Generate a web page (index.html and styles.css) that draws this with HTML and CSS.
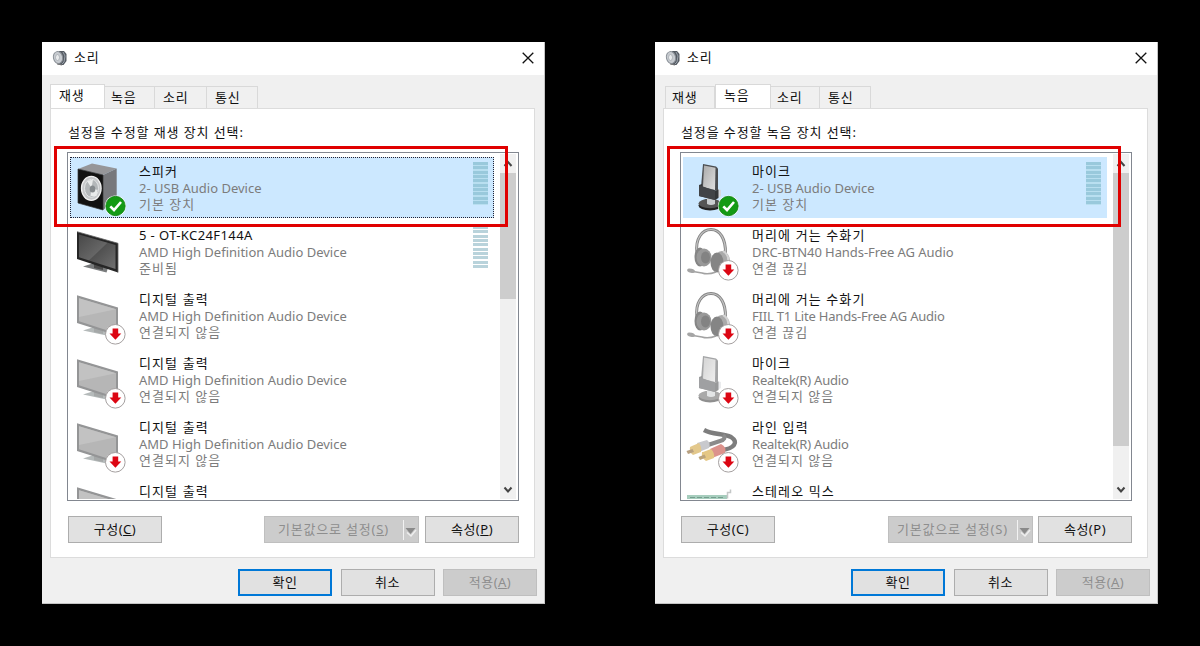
FILE: index.html
```html
<!DOCTYPE html>
<html lang="ko">
<head>
<meta charset="utf-8">
<title>소리</title>
<link rel="stylesheet" href="styles.css">
</head>
<body>
<svg class="defs" aria-hidden="true">
  <defs>
    <linearGradient id="screen" x1="0" y1="0" x2="1" y2="1"><stop offset="0" stop-color="#484848"/><stop offset=".5" stop-color="#666"/><stop offset=".52" stop-color="#515151"/><stop offset="1" stop-color="#707070"/></linearGradient>
    <linearGradient id="metal" x1="0" y1="0" x2="1" y2="1"><stop offset="0" stop-color="#aaa"/><stop offset="1" stop-color="#e0e0e0"/></linearGradient>
    <symbol id="app" viewBox="0 0 16 16">
      <path d="M7 1l5 0 2.500 3v7l-3 4-5 0z" fill="#555b63"/>
      <path d="M11 2l2 4-1 6-2 2" stroke="#9aa2ab" fill="none"/>
      <ellipse cx="6" cy="7.500" rx="4.600" ry="6" fill="#c7cbd0" stroke="#8c9299" transform="rotate(-12 6 7.500)"/>
      <ellipse cx="5.500" cy="7.500" rx="2" ry="3" fill="#e9ebed" stroke="#a1a6ac" stroke-width=".7"/>
      <path d="M5 14l5 1" stroke="#777" stroke-width="1"/>
    </symbol>
    <symbol id="ok" viewBox="0 0 56 62">
      <circle cx="45.500" cy="49" r="10.600" fill="#fff"/>
      <circle cx="45.500" cy="49" r="9.700" fill="#149a14" stroke="#0c7f12" stroke-width=".8"/>
      <path d="M40.300 49.300l3.700 3.700 7-8" fill="none" stroke="#fff" stroke-width="2.600"/>
    </symbol>
    <symbol id="down" viewBox="0 0 56 62">
      <circle cx="45.300" cy="49.300" r="9.800" fill="#fff" stroke="#a5a0a0" stroke-width="1"/>
      <path d="M42.600 43.500h5.600v5h3.100l-5.900 6.300-5.900-6.300h3.100z" fill="#dc0613"/>
    </symbol>
    <symbol id="speaker" viewBox="0 0 56 62">
      <path d="M8 12L22 6.500 46.700 11.500 33 18z" fill="#969699"/>
      <path d="M33 18l13.700-6.500V42L33 53z" fill="#77787c"/>
      <path d="M8 12l25 6v35L8 46z" fill="#121212" stroke="#333" stroke-width=".7"/>
      <ellipse cx="21.300" cy="31.300" rx="9.800" ry="12" fill="#c6c8ca" stroke="#f1f1f1" stroke-width="1.300"/>
      <ellipse cx="21.500" cy="31.300" rx="7" ry="9" fill="#b3b7b9" stroke="#e2e4e5"/>
      <path d="M21.500 31l-4.500-7 6-1.500zM21.500 31l6 2-1 6-6 0z" fill="#e9ebeb"/>
      <ellipse cx="22.500" cy="32" rx="2.800" ry="3.500" fill="#858a8d"/>
    </symbol>
    <symbol id="tv" viewBox="0 0 56 62">
      <path d="M13 45.500l11-3.500 14 5-1.500 4.500z" fill="#797b7c"/>
      <path d="M24 41l9 2v6l-9-2z" fill="#4b4b4b"/>
      <path d="M7 10.700l41 11.600v29.200L7 38z" fill="#262626"/>
      <path d="M9 13.500l36.500 10.600v24L9 36.300z" fill="url(#screen)"/>
      <path d="M7 10.700l41 11.600v29.200" fill="none" stroke="#666" stroke-width=".8"/>
    </symbol>
    <symbol id="tvoff" viewBox="0 0 56 62">
      <path d="M13 45.500l11-3.500 14 5-1.500 3.500z" fill="#b5baba"/>
      <path d="M24 41l9 2v6l-9-2z" fill="#a5a8a8"/>
      <path d="M7 10.300l41 12.200v28.500L7 38z" fill="#949596"/>
      <path d="M9 13.300l37 11v24L9 36.300z" fill="#b6b6b6"/>
      <path d="M9 13.300l37 11L9 32z" fill="#c2c2c2"/>
    </symbol>
    <symbol id="mic" viewBox="0 0 56 62">
      <ellipse cx="27" cy="48.500" rx="11.500" ry="5" fill="#222"/>
      <ellipse cx="27" cy="46.500" rx="11.500" ry="4.700" fill="#555"/>
      <path d="M24 40h8v7q-4 2-8 0z" fill="#c9cdcf"/>
      <path d="M34 32l4 1v6l-4 2z" fill="#d7d9dc"/>
      <path d="M20 7l13 2.500 2 2V34l-17-4z" fill="#4b4d50"/>
      <path d="M21 8.500l11.500 2.300L32 33l-12-3z" fill="url(#metal)"/>
      <path d="M16 28l3-1v3l14 3.500 2.500-1V41L32 43l-16-4z" fill="#343638"/>
      <path d="M16 28v11l16 4V34z" fill="#424447"/>
    </symbol>
    <symbol id="headset" viewBox="0 0 56 62">
      <path d="M14 32C12 18 19 8.500 28 8.500S43 18 42.500 33" fill="none" stroke="#858585" stroke-width="3"/>
      <path d="M14 32C12 18 19 8.500 28 8.500S43 18 42.500 33" fill="none" stroke="#c4c4c4" stroke-width="1.200"/>
      <ellipse cx="17" cy="36" rx="5.500" ry="9.500" fill="#858585"/>
      <ellipse cx="21" cy="36.500" rx="7.500" ry="9" fill="#999"/>
      <ellipse cx="22.500" cy="36.500" rx="4.500" ry="6" fill="#838383"/>
      <ellipse cx="39" cy="40" rx="8" ry="10" fill="#aaa"/>
      <ellipse cx="34" cy="41.500" rx="6.500" ry="10" fill="#858585"/>
      <path d="M40 30q6 3 5 11" stroke="#d4d4d4" fill="none" stroke-width="2"/>
      <path d="M33 51q-8 3-14 1L7 50" fill="none" stroke="#a2a2a2" stroke-width="1.500"/>
      <ellipse cx="8" cy="49.800" rx="4" ry="2" fill="#a5a5a5" transform="rotate(15 8 50)"/>
    </symbol>
    <symbol id="rca" viewBox="0 0 56 62">
      <path d="M21 17c9 5 19 3 27 7q6 4 3 8-3 4-12 5" fill="none" stroke="#7d7d7d" stroke-width="4.500"/>
      <path d="M40 22q4 4-3 6l-12 4" fill="none" stroke="#8b8b8b" stroke-width="4"/>
      <path d="M14 30l10-3q4 3 2 8l-10 4z" fill="#c8c9cd"/>
      <path d="M9 33l7-3q3 4 2 9l-8 3q-4-3-3-8z" fill="#e3c88c"/>
      <path d="M3.500 38l6-2 1.500 3-6 2z" fill="#b7a080"/>
      <path d="M27 36l11-5q6 3 4 9l-13 5z" fill="#dc928c"/>
      <path d="M20 39l8-3q4 4 3 9l-8 3q-5-3-4-9z" fill="#e5c784"/>
      <path d="M15.500 44l6-2.500 1.500 3-6 2.500z" fill="#bca47b"/>
    </symbol>
    <symbol id="card" viewBox="0 0 56 62">
      <path d="M4 18h40v8H4z" fill="#a6cdbd"/>
      <path d="M7 20.500h34" stroke="#759e8e" stroke-dasharray="5 2"/>
      <path d="M47.500 12.500v3h-3v6" stroke="#c4c7c7" stroke-width="1.500" fill="none"/>
    </symbol>
  </defs>
</svg>

<main class="stage">
  <section class="dialog">
    <header class="titlebar">
      <svg class="app"><use href="#app"/></svg><h1>소리</h1>
      <svg class="close" viewBox="0 0 12 12"><path d="M.7.700l10.600 10.600M11.300.700L.7 11.300"/></svg>
    </header>
    <nav class="tabs"><span class="tab w55 active">재생</span><span class="tab w50">녹음</span><span class="tab w52 inset">소리</span><span class="tab w51 inset">통신</span></nav>
    <div class="panel">
      <p class="hint">설정을 수정할 재생 장치 선택:</p>
      <div class="list">
        <ul class="rows">
          <li class="row selected focus"><svg class="icon"><use href="#speaker"/><use href="#ok"/></svg><div class="info"><b>스피커</b><span>2- USB Audio Device</span><span class="state">기본 장치</span></div><i class="meter"></i></li>
          <li class="row"><svg class="icon"><use href="#tv"/></svg><div class="info"><b class="latin">5 - OT-KC24F144A</b><span>AMD High Definition Audio Device</span><span class="state">준비됨</span></div><i class="meter"></i></li>
          <li class="row"><svg class="icon"><use href="#tvoff"/><use href="#down"/></svg><div class="info"><b>디지털 출력</b><span>AMD High Definition Audio Device</span><span class="state">연결되지 않음</span></div></li>
          <li class="row"><svg class="icon"><use href="#tvoff"/><use href="#down"/></svg><div class="info"><b>디지털 출력</b><span>AMD High Definition Audio Device</span><span class="state">연결되지 않음</span></div></li>
          <li class="row"><svg class="icon"><use href="#tvoff"/><use href="#down"/></svg><div class="info"><b>디지털 출력</b><span>AMD High Definition Audio Device</span><span class="state">연결되지 않음</span></div></li>
          <li class="row"><svg class="icon"><use href="#tvoff"/></svg><div class="info"><b>디지털 출력</b></div></li>
        </ul>
        <div class="scrollbar">
          <svg class="arrow" viewBox="0 0 16 19"><path d="M4.500 12L8 8l3.500 4"/></svg>
          <div class="thumb short"></div>
          <svg class="arrow end" viewBox="0 0 16 19"><path d="M4.500 7.500L8 11.500l3.500-4"/></svg>
        </div>
        <div class="mark"></div>
      </div>
      <div class="actions">
        <span class="btn">구성(<u>C</u>)</span>
        <span class="btn off split"><span class="label">기본값으로 설정(<u>S</u>)</span><svg class="drop" viewBox="0 0 16 25"><path class="sep" d="M1.500 3v20"/><path class="shade" d="M5 15.500l4 3.500 5-6"/><path class="tri" d="M3.500 11h10l-5 6z"/></svg></span>
        <span class="btn last">속성(<u>P</u>)</span>
      </div>
    </div>
    <footer class="foot"><span class="btn primary">확인</span><span class="btn">취소</span><span class="btn off">적용(<u>A</u>)</span></footer>
  </section>

  <section class="dialog">
    <header class="titlebar">
      <svg class="app"><use href="#app"/></svg><h1>소리</h1>
      <svg class="close" viewBox="0 0 12 12"><path d="M.7.700l10.600 10.600M11.300.700L.7 11.300"/></svg>
    </header>
    <nav class="tabs second"><span class="tab w50 first">재생</span><span class="tab w56 active">녹음</span><span class="tab w49">소리</span><span class="tab w51 inset">통신</span></nav>
    <div class="panel">
      <p class="hint">설정을 수정할 녹음 장치 선택:</p>
      <div class="list">
        <ul class="rows">
          <li class="row selected"><svg class="icon"><use href="#mic"/><use href="#ok"/></svg><div class="info"><b>마이크</b><span>2- USB Audio Device</span><span class="state">기본 장치</span></div><i class="meter"></i></li>
          <li class="row"><svg class="icon"><use href="#headset"/><use href="#down"/></svg><div class="info"><b>머리에 거는 수화기</b><span class="snug">DRC-BTN40 Hands-Free AG Audio</span><span class="state">연결 끊김</span></div></li>
          <li class="row"><svg class="icon"><use href="#headset"/><use href="#down"/></svg><div class="info"><b>머리에 거는 수화기</b><span class="tight">FIIL T1 Lite Hands-Free AG Audio</span><span class="state">연결 끊김</span></div></li>
          <li class="row"><svg class="icon"><use class="faded" href="#mic"/><use href="#down"/></svg><div class="info"><b>마이크</b><span class="tight">Realtek(R) Audio</span><span class="state">연결되지 않음</span></div></li>
          <li class="row"><svg class="icon"><use href="#rca"/><use href="#down"/></svg><div class="info"><b>라인 입력</b><span class="tight">Realtek(R) Audio</span><span class="state">연결되지 않음</span></div></li>
          <li class="row"><svg class="icon"><use href="#card"/></svg><div class="info"><b>스테레오 믹스</b></div></li>
        </ul>
        <div class="scrollbar">
          <svg class="arrow" viewBox="0 0 16 19"><path d="M4.500 12L8 8l3.500 4"/></svg>
          <div class="thumb long"></div>
          <svg class="arrow end" viewBox="0 0 16 19"><path d="M4.500 7.500L8 11.500l3.500-4"/></svg>
        </div>
        <div class="mark"></div>
      </div>
      <div class="actions">
        <span class="btn">구성(C)</span>
        <span class="btn off split narrow"><span class="label">기본값으로 설정(S)</span><svg class="drop" viewBox="0 0 16 25"><path class="sep" d="M1.500 3v20"/><path class="shade" d="M5 15.500l4 3.500 5-6"/><path class="tri" d="M3.500 11h10l-5 6z"/></svg></span>
        <span class="btn last">속성(P)</span>
      </div>
    </div>
    <footer class="foot"><span class="btn primary">확인</span><span class="btn">취소</span><span class="btn off">적용(<u>A</u>)</span></footer>
  </section>
</main>
</body>
</html>
```
FILE: styles.css
```css
* { box-sizing: border-box; }
body {
  margin: 0;
  background: #000;
  color: #111;
  font: 13px/16px "Noto Sans", "Noto Sans CJK KR", sans-serif;
  white-space: nowrap;
}
.defs { position: absolute; width: 0; height: 0; }
.stage { display: flex; gap: 110px; width: 1200px; height: 646px; padding: 42px 0 0 42px; overflow: hidden; }
.dialog { display: flex; flex-direction: column; flex: none; width: 503px; height: 562px; background: #f0f0f0; border: solid #c4c4c4; border-width: 0 1px 1px 0; }
.titlebar { display: flex; align-items: center; height: 33px; padding: 0 10px 2px 10px; background: #fff; }
.app { width: 16px; height: 16px; }
.titlebar h1 { margin: 0 auto 0 6px; padding-bottom: 2px; font-size: 13px; line-height: 16px; font-weight: 400; letter-spacing: .8px; }
.close { width: 12px; height: 12px; }
.close path { stroke: #111; stroke-width: 1.3; fill: none; }

.tabs { display: flex; align-items: flex-end; height: 33px; padding-left: 8px; letter-spacing: .8px; }
.tabs.second { padding-left: 10px; }
.tab { height: 22px; padding: 2px 0 0 6px; border: 1px solid #d9d9d9; border-width: 1px 1px 0 0; }
.tab.inset { padding-left: 8px; }
.tab.first { border-left-width: 1px; }
.tab.active { height: 25px; margin-bottom: -1px; padding: 2px 0 0 8px; background: #fff; border-left-width: 1px; }
.w49 { width: 49px; } .w50 { width: 50px; } .w51 { width: 51px; } .w52 { width: 52px; } .w55 { width: 55px; } .w56 { width: 56px; }

.panel { width: 485px; height: 450px; margin: 0 0 0 8px; padding: 15px 15px 0 16px; background: #fff; border: 1px solid #dcdcdc; }
.hint { margin: 0 0 12px 1px; height: 16px; letter-spacing: .9px; }
.list { position: relative; display: flex; justify-content: space-between; width: 452px; height: 349px; border: 1px solid #828790; padding: 1px 2px 1px 2px; }
.rows { width: 424px; height: 345px; margin: 0; padding: 3px 0 0; list-style: none; overflow: hidden; }
.row { display: flex; height: 61px; margin-bottom: 3px; }
.selected { background: #cce8ff; }
.focus { outline: 1px dotted #223; outline-offset: -1px; }
.icon { width: 56px; height: 62px; flex: none; }
.icon use { width: 56px; height: 62px; }
.faded { opacity: .5; }
.info { display: flex; flex-direction: column; flex: 1; padding: 6px 0 0 13px; color: #7c7c7c; }
.info b { color: #111; font-weight: 400; height: 17px; letter-spacing: 1.1px; }
.info b.latin { letter-spacing: .4px; }
.info span { height: 16px; }
.info .state { letter-spacing: 1px; }
.info .snug { letter-spacing: -.07px; }
.info .tight { letter-spacing: -.2px; }
.meter { width: 15px; height: 43px; margin: 5px 6px 0 0; background: repeating-linear-gradient(#b9d3db 0 3px, transparent 3px 4.330px); }
.selected .meter { background: repeating-linear-gradient(#99c9dc 0 3px, #b9dff0 3px 4.330px); }
.scrollbar { display: flex; flex-direction: column; width: 16px; background: #f0f0f0; }
.arrow { width: 16px; height: 19px; }
.arrow path { fill: none; stroke: #444; stroke-width: 2; }
.arrow.end { margin-top: auto; }
.thumb { background: #cdcdcd; }
.short { height: 126px; }
.long { height: 273px; }
.mark { position: absolute; left: -14px; top: -7px; width: 454px; height: 81px; border: 3px solid #e00000; }

.actions { display: flex; margin: 15px 0 0 1px; }
.btn { display: flex; align-items: center; justify-content: center; width: 94px; height: 27px; padding-bottom: 2px; background: #e1e1e1; border: 1px solid #adadad; letter-spacing: .5px; }
.btn u { text-underline-offset: 1px; }
.btn.last { margin-left: 6px; }
.btn.off { background: #ccc; border-color: #bfbfbf; color: #8e8e8e; }
.btn.primary { border: 2px solid #0078d7; }
.split { width: 155px; margin-left: auto; padding: 0; letter-spacing: .8px; }
.split.narrow { width: 145px; }
.split.narrow + .last { margin-left: 5px; }
.split .label { flex: 1; text-align: center; padding-bottom: 2px; }
.drop { width: 16px; height: 25px; }
.sep { stroke: #f2f2f2; }
.shade { stroke: #eee; stroke-width: 1.5; fill: none; }
.tri { fill: #8a8a8a; }
.foot { display: flex; gap: 8.5px; justify-content: flex-end; margin-top: 11px; padding-right: 7px; }
```
